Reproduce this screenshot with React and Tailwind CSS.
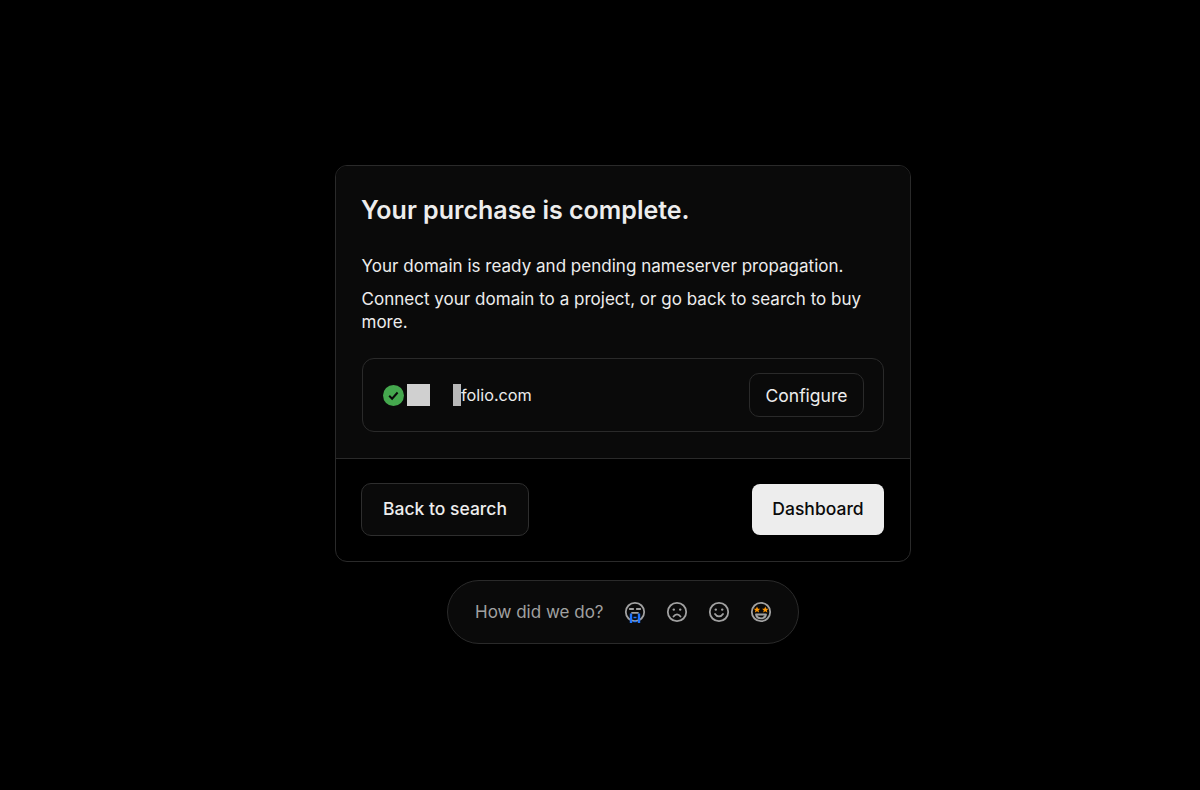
import React from "react";

const font = { fontFamily: "Inter, sans-serif" };

function CheckBadge() {
  return (
    <svg width="21" height="21" viewBox="0 0 21 21">
      <circle cx="10.5" cy="10.5" r="10.5" fill="#45a84e" />
      <path d="M6.2 10.800l2.900 2.900 5.500-6.200" fill="none" stroke="#0a0a0a" strokeWidth="2" />
    </svg>
  );
}

function Face({ children }) {
  return (
    <svg width="22" height="22" viewBox="0 0 22 22" fill="none" stroke="#a1a1a1" strokeWidth="1.8" strokeLinecap="round">
      <circle cx="11" cy="11" r="9.2" />
      {children}
    </svg>
  );
}

function Feedback() {
  return (
    <div className="flex items-center gap-[20px]">
      <Face>
        <path d="M5.800 8h3.400M12.800 8h3.400M8 11.800h6" />
        <path d="M7 12.500V22M15 12.500V22" stroke="#2176ff" strokeWidth="2.400" strokeLinecap="butt" />
        <path d="M9.500 16.500h3M9.500 20.500h3" stroke="#2176ff" strokeWidth="1.300" strokeLinecap="butt" />
      </Face>
      <Face>
        <circle cx="7.800" cy="8.600" r="1.200" fill="#a1a1a1" stroke="none" />
        <circle cx="14.200" cy="8.600" r="1.200" fill="#a1a1a1" stroke="none" />
        <path d="M7.500 15.500c1-1.500 2.200-2.200 3.500-2.200s2.500.7 3.500 2.200" />
      </Face>
      <Face>
        <circle cx="7.800" cy="8.600" r="1.200" fill="#a1a1a1" stroke="none" />
        <circle cx="14.200" cy="8.600" r="1.200" fill="#a1a1a1" stroke="none" />
        <path d="M7 13c1 1.600 2.400 2.400 4 2.400s3-.8 4-2.400" />
      </Face>
      <Face>
        <path d="M7 5.500l1 2.200h2.300l-1.800 1.500.6 2.300L7 10.300l-2.100 1.200.6-2.300-1.800-1.500H6z" fill="#ff9500" stroke="none" />
        <path d="M15.300 5.500l1 2.200h2.300l-1.800 1.500.6 2.300-2.100-1.200-2.100 1.200.6-2.300-1.800-1.500h2.300z" fill="#ff9500" stroke="none" />
        <path d="M6 13.500h10c-.4 2.400-2.500 3.800-5 3.800s-4.600-1.400-5-3.800z" strokeLinejoin="round" />
      </Face>
    </div>
  );
}

export default function App() {
  return (
    <div className="min-h-screen bg-black flex flex-col items-center pt-[165px]" style={font}>
      <div className="w-[576px] ml-[46px] rounded-xl border border-[#2a2a2a] overflow-hidden bg-black">
        <div className="bg-[#0a0a0a] px-[26px] pt-[26px] pb-[26px] border-b border-[#2a2a2a]">
          <h1 className="-ml-px text-[25px] leading-[36px] font-semibold text-[#ededed]">Your purchase is complete.</h1>
          <p className="-ml-[0.5px] mt-[26px] text-[17px] leading-[24px] tracking-[0.02px] text-[#ededed]">
            Your domain is ready and pending nameserver propagation.
          </p>
          <p className="-ml-[0.5px] mt-[10px] text-[17px] leading-[23px] tracking-[0.02px] text-[#ededed]">
            Connect your domain to a project, or go back to search to buy more.
          </p>
          <div className="mt-[24px] h-[74px] rounded-xl border border-[#2a2a2a] flex items-center justify-between pl-[20px] pr-[19px]">
            <div className="flex items-center">
              <CheckBadge />
              <span className="ml-[3px] w-[23px] h-[22px] bg-[#d0d0d0]" />
              <span className="ml-[23px] w-[8px] h-[22px] bg-[#b8b8b8]" />
              <span className="text-[16.250px] text-[#ededed]">folio.com</span>
            </div>
            <button className="h-[44px] w-[115px] pt-[2px] rounded-[10px] border border-[#2a2a2a] bg-[#0a0a0a] text-[17.500px] text-[#ededed]">
              Configure
            </button>
          </div>
        </div>
        <div className="h-[102px] pb-px pl-[25px] pr-[26px] flex items-center justify-between">
          <button className="h-[53px] w-[168px] rounded-[10px] border border-[#2e2e2e] bg-[#0a0a0a] text-[17.500px] font-medium text-[#ededed]">
            Back to search
          </button>
          <button className="h-[51px] w-[132px] rounded-[8px] bg-[#ededed] text-[17.500px] font-medium text-[#0a0a0a]">
            Dashboard
          </button>
        </div>
      </div>
      <div className="mt-[18px] ml-[46px] h-[64px] w-[352px] rounded-full border border-[#2a2a2a] bg-[#0a0a0a] flex items-center pl-[27px]">
        <span className="pt-px text-[17px] text-[#a1a1a1] mr-[20px]">How did we do?</span>
        <Feedback />
      </div>
    </div>
  );
}
